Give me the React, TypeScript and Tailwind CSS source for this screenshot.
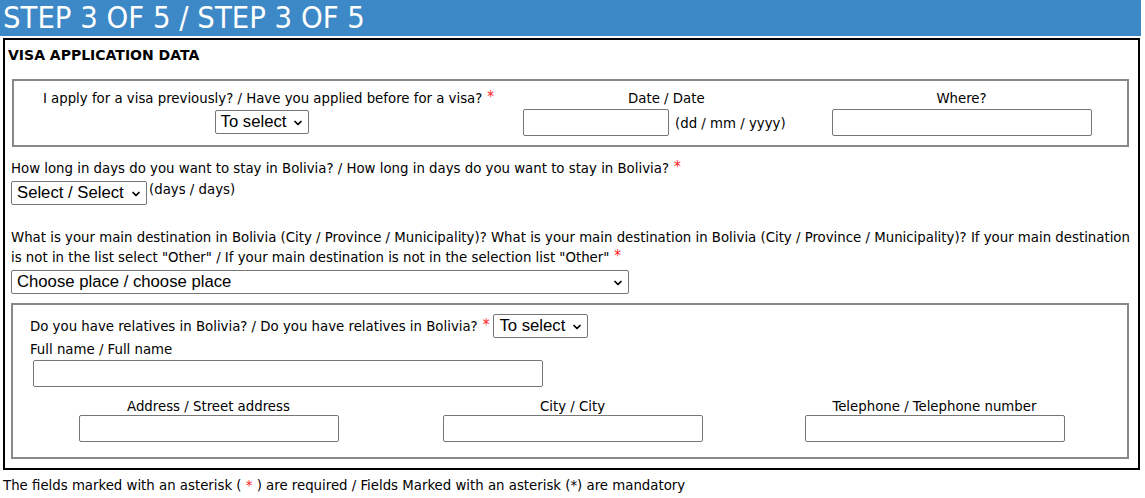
import { ChevronDown } from 'lucide-react'

const body = "font-['DejaVu_Sans_Condensed','Liberation_Sans',sans-serif] [font-stretch:condensed]"

function Req() {
  return <span className="ml-[5px] text-[#ff2020] text-[15px] leading-none align-[1px]">*</span>
}

function Select({ label, className = '' }: { label: string; className?: string }) {
  return (
    <div className={`relative inline-flex h-[24px] items-center rounded-[2px] border border-[#767676] bg-white pl-[5px] pr-[22px] font-['Liberation_Sans',Arial,sans-serif] text-[16.7px] [font-stretch:normal] text-black ${className}`}>
      <span className="leading-none">{label}</span>
      <ChevronDown className="pointer-events-none absolute right-[4px] top-[6px] h-[12px] w-[12px]" strokeWidth={3.5} />
    </div>
  )
}

function Field({ className = '' }: { className?: string }) {
  return <input type="text" className={`h-[27px] rounded-[2px] border border-[#767676] bg-white ${className}`} />
}

export default function App() {
  return (
    <div className={`w-[1145px] h-[498px] bg-white text-[14.8px] leading-[20px] text-black ${body}`}>
      <div className="mr-[4px] flex h-[36px] items-center bg-[#3d88c6] px-[3px]">
        <h1 className="text-[30.7px] font-normal leading-none text-white">STEP 3 OF 5 / STEP 3 OF 5</h1>
      </div>

      <div className="mx-[3px] mt-[2px] mr-[5px] h-[432px] border-2 border-black pl-[6px] pr-[7px] pt-[5px]">
        <h2 className="-ml-[3px] font-['DejaVu_Sans',sans-serif] [font-stretch:normal] text-[14px] font-bold leading-[20px]">VISA APPLICATION DATA</h2>

        <div className="mt-[14px] mr-[2px] ml-[1px] grid h-[68px] grid-cols-[509px_279px_1fr] border-2 border-[#888888] pt-[7px]">
          <div className="flex flex-col items-center">
            <span>
              I apply for a visa previously? / Have you applied before for a visa?
              <Req />
            </span>
            <Select label="To select" className="mt-[2px] -ml-[13px]" />
          </div>
          <div className="flex flex-col items-start">
            <span className="pl-[105px]">Date / Date</span>
            <div className="mt-[1px] flex items-center gap-[6px]">
              <Field className="w-[146px]" />
              <span>(dd / mm / yyyy)</span>
            </div>
          </div>
          <div className="flex flex-col items-center pr-[6px]">
            <span>Where?</span>
            <Field className="mt-[1px] w-[260px]" />
          </div>
        </div>

        <p className="mt-[11px]">
          How long in days do you want to stay in Bolivia? / How long in days do you want to stay in Bolivia?
          <Req />
        </p>
        <div className="mt-[3px] flex items-start">
          <Select label="Select / Select" className="w-[136px]" />
          <span className="ml-[2px] -mt-[2px]">(days / days)</span>
        </div>

        <p className="mt-[22px]">
          What is your main destination in Bolivia (City / Province / Municipality)? What is your main destination in Bolivia (City / Province / Municipality)? If your main destination is not in the list select "Other" / If your main destination is not in the selection list "Other"
          <Req />
        </p>
        <Select label="Choose place / choose place" className="mt-[3px] w-[618px]" />

        <div className="mt-[9px] mr-[2px] h-[156px] border-2 border-[#888888] pl-[17px] pr-[16px] pt-[9px]">
          <div className="flex items-center">
            <span>
              Do you have relatives in Bolivia? / Do you have relatives in Bolivia?
              <Req />
            </span>
            <Select label="To select" className="ml-[4px]" />
          </div>
          <p className="mt-[1px]">Full name / Full name</p>
          <Field className="mt-[1px] ml-[3px] w-[510px]" />
          <div className="mt-[10px] grid grid-cols-[357px_371px_1fr]">
            <div className="flex flex-col items-center">
              <span className="leading-[18px]">Address / Street address</span>
              <Field className="w-[260px]" />
            </div>
            <div className="flex flex-col items-center">
              <span className="leading-[18px]">City / City</span>
              <Field className="w-[260px]" />
            </div>
            <div className="flex flex-col items-center">
              <span className="leading-[18px]">Telephone / Telephone number</span>
              <Field className="w-[260px]" />
            </div>
          </div>
        </div>
      </div>

      <p className="mt-[5px] px-[3px]">
        The fields marked with an asterisk ( <span className="text-[#ff2020]">*</span> ) are required / Fields Marked with an asterisk (*) are mandatory
      </p>
    </div>
  )
}
